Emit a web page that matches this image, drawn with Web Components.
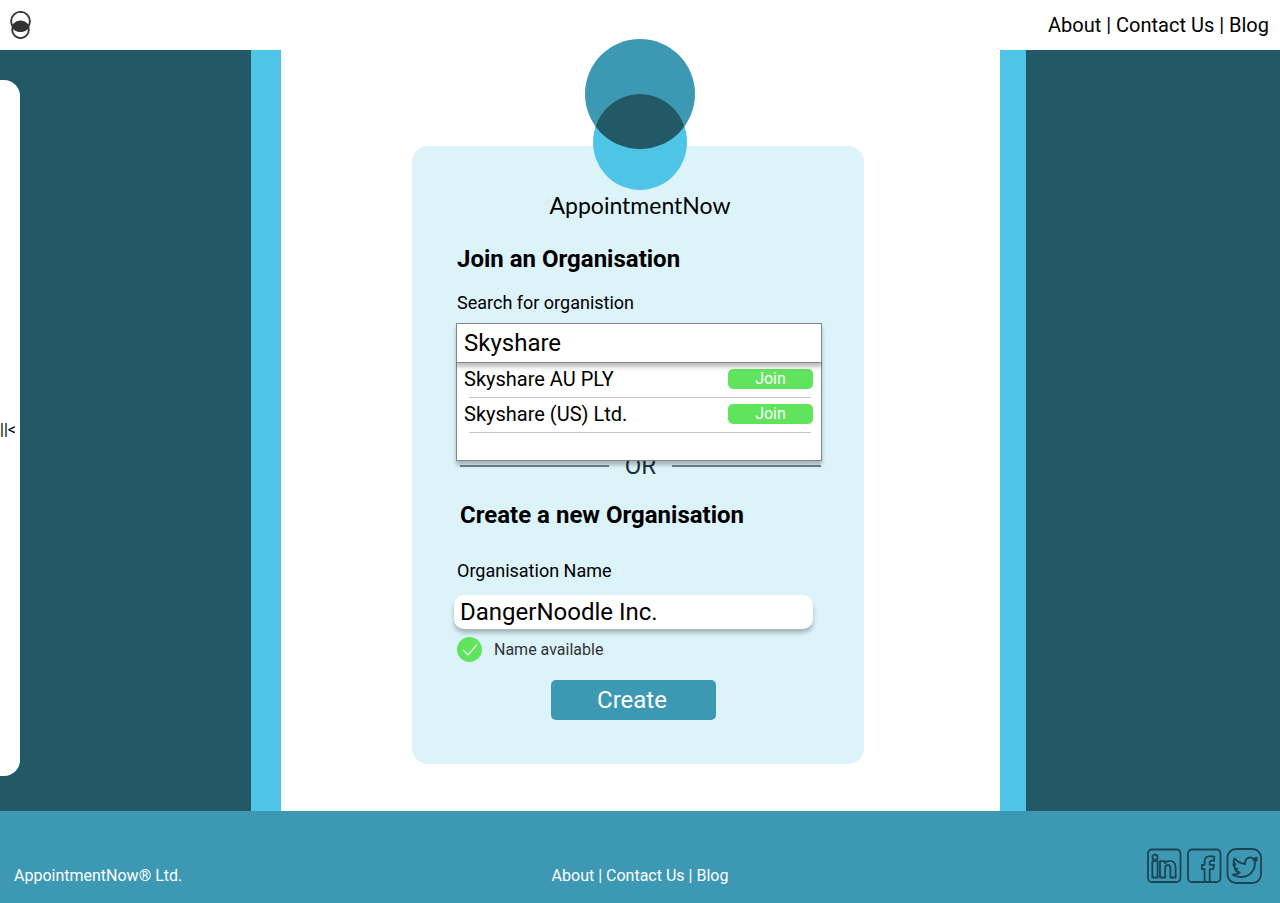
<!DOCTYPE html>
<html lang="en">
<head>
<meta charset="utf-8">
<meta name="viewport" content="width=device-width, initial-scale=1">
<title>AppointmentNow</title>
<style>
  :root {
    --deep: #235866;
    --teal: #3d98b4;
    --sky: #4ec5e7;
    --ice: #dcf3fa;
    --green: #60e45e;
  }
  body { margin: 0; font-family: Roboto, "Liberation Sans", sans-serif; color: #000; }
</style>
</head>
<body>
<app-shell>
  <app-header slot="header"><nav-links></nav-links></app-header>
  <side-drawer slot="drawer"></side-drawer>
  <brand-card>
    <org-search></org-search>
    <or-divider>OR</or-divider>
    <org-create></org-create>
  </brand-card>
  <app-footer slot="footer">
    <span slot="company">AppointmentNow® Ltd.</span>
    <nav-links slot="links"></nav-links>
    <social-links slot="social"></social-links>
  </app-footer>
</app-shell>
<script>
const define = (name, html) => {
  const template = document.createElement("template");
  template.innerHTML = html;
  customElements.define(name, class extends HTMLElement {
    constructor() {
      super();
      this.attachShadow({ mode: "open" }).append(template.content.cloneNode(true));
    }
  });
};

define("app-shell", `
<style>
  :host { display: flex; flex-direction: column; min-height: 100vh; }
  main { flex: 1; display: grid; grid-template-columns: 251fr 30px minmax(480px, 719fr) 26px 254fr; }
  .side { background: var(--deep); display: flex; }
  .stripe { background: var(--sky); }
  .stage { background: #fff; padding: 96px 0 47px 131px; box-sizing: border-box; }
  @media (max-width: 1100px) { .stage { padding-left: 12px; } }
</style>
<slot name="header"></slot>
<main>
  <div class="side"><slot name="drawer"></slot></div>
  <div class="stripe"></div>
  <div class="stage"><slot></slot></div>
  <div class="stripe"></div>
  <div class="side"></div>
</main>
<slot name="footer"></slot>`);

define("app-header", `
<style>
  :host { display: flex; align-items: center; justify-content: space-between;
    height: 50px; padding: 0 11px 0 10px; background: #fff; font-size: 20px; line-height: 23px; }
  a { display: flex; }
</style>
<a href="#" aria-label="Home">
  <svg width="21" height="28" viewBox="0 0 21 28" fill="none" stroke="#333" stroke-width="1.9">
    <circle cx="10.5" cy="10.3" r="9.4"/>
    <circle cx="10.5" cy="18.8" r="8.3"/>
    <path d="M2.6 16.2C4.2 12.4 7 10.6 10.5 10.6s6.300 1.800 7.900 5.600c-2 2.600-4.800 3.800-7.900 3.800s-5.900-1.200-7.900-3.800Z" fill="#333"/>
  </svg>
</a>
<slot></slot>`);

define("nav-links", `
<style>
  :host { display: block; white-space: nowrap; }
  a { color: inherit; text-decoration: none; }
</style>
<nav><a href="#about">About</a> | <a href="#contact">Contact Us</a> | <a href="#blog">Blog</a></nav>`);

define("side-drawer", `
<style>
  :host { display: flex; margin: 30px 0 35px; }
  button { width: 20px; padding: 4px 0 0; border: 0; border-radius: 0 16px 16px 0; background: #fff;
    color: #000; font: 16px/20px Roboto, sans-serif; text-align: left; }
</style>
<button type="button" aria-label="Open menu">||&lt;</button>`);

define("brand-card", `
<style>
  :host { display: flex; flex-direction: column; box-sizing: border-box; width: 452px; max-width: 100%;
    padding: 0 38px 44px 42px; border-radius: 16px; background: var(--ice); }
  .logo { align-self: center; margin-top: -107px; position: relative; }
  .name { margin: 0; text-align: center; font: 23px/30px Lato, sans-serif; }
</style>
<svg class="logo" width="110" height="151" viewBox="0 0 110 151" aria-hidden="true">
  <defs><clipPath id="top"><circle cx="55" cy="55" r="55"/></clipPath></defs>
  <circle cx="55" cy="55" r="55" fill="#3d98b4"/>
  <ellipse cx="55" cy="103" rx="47" ry="48" fill="#4ec5e7"/>
  <ellipse cx="55" cy="103" rx="47" ry="48" fill="#235866" clip-path="url(#top)"/>
</svg>
<p class="name">AppointmentNow</p>
<slot></slot>`);

define("org-search", `
<style>
  :host { display: block; max-width: 366px; margin: 25px 0 0 2px; }
  h2 { margin: 0 0 18px 1px; font-size: 24px; line-height: 28px; }
  label { display: block; margin: 0 0 8px 1px; font-size: 18px; line-height: 24px; }
  .combo { position: relative; }
  input { position: relative; z-index: 2; display: block; box-sizing: border-box; width: 100%; height: 40px;
    padding: 0 7px; border: 1px solid #858585; border-radius: 0; background: #fff; color: #000;
    font: 24px Roboto, sans-serif; outline: none; box-shadow: 0 4px 4px rgba(0,0,0,.25); }
  ul { position: absolute; z-index: 1; top: 100%; left: 0; right: 0; box-sizing: border-box; height: 98px;
    margin: 0; padding: 0; border: 1px solid #858585; border-top: 0; background: #fff; list-style: none;
    box-shadow: 0 4px 4px rgba(0,0,0,.25); }
</style>
<h2>Join an Organisation</h2>
<label for="q">Search for organistion</label>
<div class="combo">
  <input id="q" type="text" value="Skyshare" autocomplete="off">
  <ul>
    <li><org-result>Skyshare AU PLY</org-result></li>
    <li><org-result>Skyshare (US) Ltd.</org-result></li>
  </ul>
</div>`);

define("org-result", `
<style>
  :host { display: flex; justify-content: space-between; align-items: center; box-sizing: border-box;
    height: 35px; padding: 0 8px 4px 7px; font-size: 20px; line-height: 24px;
    background: linear-gradient(#c4c4c4, #c4c4c4) 12px 100% / calc(100% - 22px) 1px no-repeat; }
  button { width: 85px; height: 20px; padding: 0; border: 0; border-radius: 5px; background: var(--green);
    color: #fff; font: 16px/20px Roboto, sans-serif; }
</style>
<slot></slot><button type="button">Join</button>`);

define("or-divider", `
<style>
  :host { display: flex; align-items: center; gap: 16px; margin: 89px 5px 0 6px;
    color: #15333c; font-size: 24px; line-height: 28px; }
  i { flex: 1; height: 2px; background: #6b8790; }
</style>
<i></i><slot></slot><i></i>`);

define("org-create", `
<style>
  :host { display: flex; flex-direction: column; max-width: 359px; margin-top: 21px; }
  h2 { margin: 0 0 30px 6px; font-size: 24px; line-height: 28px; }
  label { margin: 0 0 12px 3px; font-size: 18px; line-height: 24px; }
  input { box-sizing: border-box; width: 100%; height: 34px; padding: 0 6px; border: 0; border-radius: 10px;
    background: #fff; color: #000; font: 24px Roboto, sans-serif; outline: none;
    box-shadow: 0 4px 4px rgba(0,0,0,.25); }
  .status { display: flex; align-items: center; gap: 12px; margin: 8px 0 18px 3px;
    color: #333; font-size: 16px; line-height: 24px; }
  button { align-self: center; width: 165px; height: 40px; padding: 0 3px 0 0; border: 0; border-radius: 5px;
    background: var(--teal); color: #fff; font: 24px/40px Roboto, sans-serif; }
</style>
<h2>Create a new Organisation</h2>
<label for="name">Organisation Name</label>
<input id="name" type="text" value="DangerNoodle Inc." autocomplete="off">
<div class="status" role="status">
  <svg width="25" height="25" viewBox="0 0 25 25" aria-hidden="true">
    <circle cx="12.5" cy="12.5" r="12.5" fill="#60e45e"/>
    <path d="M6 12.8 11 17.8 20 7.6" fill="none" stroke="#fff" stroke-width="1.2"/>
  </svg>
  <span>Name available</span>
</div>
<button type="button">Create</button>`);

define("app-footer", `
<style>
  :host { display: grid; grid-template-columns: 1fr auto 1fr; align-items: end; box-sizing: border-box;
    height: 92px; padding: 0 14px 15px; background: var(--teal); color: #fff; font-size: 16px; line-height: 24px; }
  .end { justify-self: end; }
</style>
<div><slot name="company"></slot></div>
<div><slot name="links"></slot></div>
<div class="end"><slot name="social"></slot></div>`);

define("social-links", `
<style>
  :host { display: flex; gap: 5px; margin: 0 4px 4px 0; }
  a { display: flex; }
  svg { overflow: visible; fill: none; stroke: #1b4552; stroke-width: 1.8; stroke-linejoin: round; stroke-linecap: round; }
</style>
<a href="#linkedin" aria-label="LinkedIn">
  <svg width="35" height="36" viewBox="0 0 35 36">
    <rect x="1" y="1.5" width="32.5" height="32.5" rx="4"/>
    <circle cx="8" cy="9.2" r="2.600"/>
    <path d="M5.300 13.200h5.300v16.300H5.300ZM13 13.200h5v2c1.200-1.600 2.800-2.400 4.800-2.400 3.900 0 5.800 2.500 5.800 6.700v10h-5.200v-9.400c0-2-.8-3.100-2.500-3.100s-2.700 1.200-2.700 3.100v9.400H13Z"/>
  </svg>
</a>
<a href="#facebook" aria-label="Facebook">
  <svg width="35" height="36" viewBox="0 0 35 36">
    <rect x="1" y="1.5" width="32.5" height="32.5" rx="4"/>
    <path d="M17.600 34V21.200h-2.700v-4.400h2.700v-3.200c0-3.600 2.200-5.400 5.600-5.400 1.500 0 2.900.1 4 .4v4.100h-2.300c-1.600 0-2.200.8-2.200 2v2.100h4.300l-.7 4.400h-3.600V34"/>
  </svg>
</a>
<a href="#twitter" aria-label="Twitter">
  <svg width="35" height="36" viewBox="0 0 35 36">
    <rect x="0.5" y="1" width="33.5" height="34" rx="8.5"/>
    <g transform="translate(-1.600 -.9) scale(1.080)">
      <path d="M8.300 10.500c2.600 3 5.700 4.800 10 5.200-.6-3.700 1.600-6.100 4.600-6.100 1.400 0 2.300.5 3.200 1.300l2.900-1.100-1.100 2 1.300-.2-1.800 2.300c.2 8.200-5.400 13.800-12.600 13.800-3 0-5.800-.6-8-2.100 2.500.1 4.700-.6 6.400-2-2.200-.3-3.600-1.400-4.300-3.100l2-.2c-2.200-.9-3.400-2.500-3.500-4.700l2 .5c-1.900-1.600-2.200-3.500-1.100-5.600Z"/>
      <circle cx="26.700" cy="11.700" r=".8"/>
    </g>
  </svg>
</a>`);
</script>
</body>
</html>
